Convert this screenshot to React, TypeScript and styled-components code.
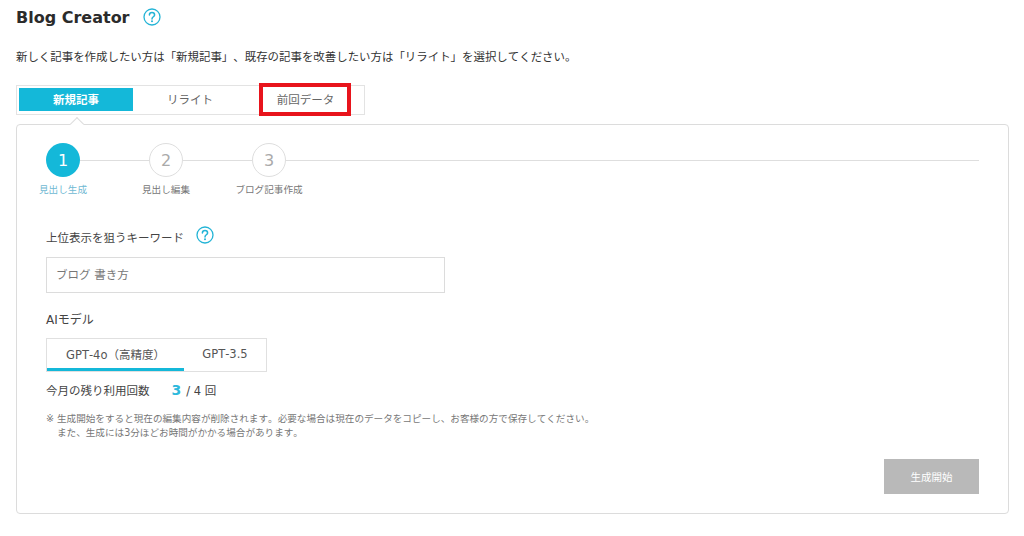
import React from "react";
import styled, { createGlobalStyle } from "styled-components";

const Global = createGlobalStyle`
  html, body { margin: 0; padding: 0; background: #fff; }
  body {
    font-family: "DejaVu Sans", "Noto Sans CJK JP", sans-serif;
    color: #333;
    text-spacing-trim: space-all;
    font-kerning: none;
  }
  * { box-sizing: border-box; }
`;

const Page = styled.div`
  width: 1024px;
  height: 536px;
  padding: 0 16px;
  overflow: hidden;
`;

const TitleRow = styled.div`
  display: flex;
  align-items: center;
  gap: 13px;
  height: 34px;
`;

const Title = styled.h1`
  margin: 0;
  font-size: 16px;
  font-weight: 700;
  color: #2b2b2b;
`;

const Lead = styled.p`
  margin: 13px 0 0;
  height: 20px;
  font-size: 11.45px;
  line-height: 20px;
  color: #333;
  white-space: nowrap;
`;

const TabsWrap = styled.div`
  position: relative;
  margin-top: 18px;
  width: 349px;
  height: 30px;
`;

const Tabs = styled.div`
  display: flex;
  width: 100%;
  height: 100%;
  padding: 2px 2px 3px 2px;
  border: 1px solid #e3e3e3;
  background: #fff;
`;

const Tab = styled.div<{ $active?: boolean; $w: number }>`
  flex: none;
  width: ${(p) => p.$w}px;
  display: flex;
  align-items: center;
  justify-content: center;
  padding-bottom: 2px;
  font-size: 11.5px;
  font-weight: ${(p) => (p.$active ? 700 : 400)};
  color: ${(p) => (p.$active ? "#fff" : "#666")};
  background: ${(p) => (p.$active ? "#14b8d9" : "transparent")};
`;

const Highlight = styled.div`
  position: absolute;
  left: 243px;
  top: -2px;
  width: 92px;
  height: 33px;
  border: 4px solid #e8141c;
`;

const Caret = styled.div`
  position: absolute;
  left: 56px;
  top: 34px;
  width: 10px;
  height: 10px;
  z-index: 2;
  background: #fff;
  border-top: 1px solid #ddd;
  border-left: 1px solid #ddd;
  transform: rotate(45deg);
`;

const Card = styled.section`
  margin-top: 9px;
  width: 993px;
  height: 390px;
  border: 1px solid #dcdcdc;
  border-radius: 4px;
  padding: 18px 29px 0;
  display: flex;
  flex-direction: column;
`;

const Stepper = styled.div`
  display: flex;
  align-items: flex-start;
  height: 52px;
`;

const StepSlot = styled.div`
  width: 34px;
  flex: none;
  display: flex;
  flex-direction: column;
  align-items: center;
`;

const Circle = styled.div<{ $active?: boolean }>`
  flex: none;
  width: 34px;
  height: 34px;
  border-radius: 50%;
  display: flex;
  align-items: center;
  justify-content: center;
  padding-top: 1px;
  font-size: 16px;
  color: ${(p) => (p.$active ? "#fff" : "#aaa")};
  background: ${(p) => (p.$active ? "#14b8d9" : "#fff")};
  border: ${(p) => (p.$active ? "none" : "1px solid #dedede")};
`;

const StepLabel = styled.div<{ $active?: boolean }>`
  margin-top: 6px;
  font-size: 9.6px;
  line-height: 13px;
  white-space: nowrap;
  color: ${(p) => (p.$active ? "#6fb9d3" : "#777")};
`;

const Connector = styled.div<{ $grow?: boolean; $w?: number }>`
  height: 1px;
  margin-top: 17px;
  background: #dedede;
  flex: ${(p) => (p.$grow ? "1" : "none")};
  width: ${(p) => p.$w ?? 0}px;
`;

const FieldLabel = styled.div`
  margin-top: 30px;
  display: flex;
  align-items: center;
  gap: 12px;
  height: 24px;
  font-size: 11.5px;
  color: #444;

  svg {
    margin-top: -4px;
  }
`;

const TextInput = styled.div`
  margin-top: 8px;
  width: 399px;
  height: 36px;
  border: 1px solid #dcdcdc;
  padding: 0 9px 3px;
  display: flex;
  align-items: center;
  font-size: 11.5px;
  color: #777;
`;

const ModelLabel = styled.div`
  margin-top: 17px;
  height: 20px;
  line-height: 20px;
  font-size: 12px;
  color: #444;
`;

const ModelTabs = styled.div`
  margin-top: 8px;
  width: 221px;
  height: 34px;
  border: 1px solid #e0e0e0;
  display: flex;
`;

const ModelTab = styled.div<{ $active?: boolean; $w: number }>`
  width: ${(p) => p.$w}px;
  display: flex;
  align-items: center;
  justify-content: center;
  font-size: 11.5px;
  color: #555;
  border-bottom: 3px solid ${(p) => (p.$active ? "#14b8d9" : "transparent")};
  white-space: nowrap;
`;

const Usage = styled.div`
  margin-top: 8px;
  height: 20px;
  display: flex;
  align-items: center;
  font-size: 11.5px;
  color: #444;
`;

const UsageCount = styled.span`
  margin-left: 22px;
  display: inline-flex;
  align-items: baseline;
  gap: 5px;
`;

const Remaining = styled.b`
  font-size: 14px;
  font-weight: 700;
  color: #2db9dc;
`;

const Note = styled.div`
  margin-top: 12px;
  display: flex;
  gap: 2px;
  font-size: 9.6px;
  line-height: 14px;
  color: #777;
  white-space: nowrap;
`;

const NoteMark = styled.span`
  width: 9px;
  flex: none;
`;

const Footer = styled.div`
  margin-top: 19px;
  display: flex;
  justify-content: flex-end;
`;

const StartButton = styled.div`
  width: 95px;
  height: 35px;
  background: #b9b9b9;
  color: #fff;
  font-size: 10.5px;
  display: flex;
  align-items: center;
  justify-content: center;
`;

const HelpIcon = ({ size }: { size: number }) => (
  <svg width={size} height={size} viewBox="0 0 18 18" fill="none" aria-hidden="true">
    <circle cx="9" cy="9" r="8" stroke="#23b4d6" strokeWidth="1.3" />
    <path
      d="M6.4 7.1C6.4 5.6 7.5 4.6 9 4.6C10.5 4.6 11.6 5.6 11.6 6.9C11.6 8.7 9 8.9 9 10.9"
      stroke="#23b4d6"
      strokeWidth="1.5"
      strokeLinecap="round"
    />
    <circle cx="9" cy="13.2" r="1" fill="#23b4d6" />
  </svg>
);

export default function App() {
  return (
    <Page>
      <Global />
      <TitleRow>
        <Title>Blog Creator</Title>
        <HelpIcon size={18} />
      </TitleRow>
      <Lead>新しく記事を作成したい方は「新規記事」、既存の記事を改善したい方は「リライト」を選択してください。</Lead>
      <TabsWrap>
        <Tabs>
          <Tab $active $w={114}>新規記事</Tab>
          <Tab $w={114}>リライト</Tab>
          <Tab $w={117}>前回データ</Tab>
        </Tabs>
        <Highlight />
        <Caret />
      </TabsWrap>
      <Card>
        <Stepper>
          <StepSlot>
            <Circle $active>1</Circle>
            <StepLabel $active>見出し生成</StepLabel>
          </StepSlot>
          <Connector $w={69} />
          <StepSlot>
            <Circle>2</Circle>
            <StepLabel>見出し編集</StepLabel>
          </StepSlot>
          <Connector $w={69} />
          <StepSlot>
            <Circle>3</Circle>
            <StepLabel>ブログ記事作成</StepLabel>
          </StepSlot>
          <Connector $grow />
        </Stepper>
        <FieldLabel>
          上位表示を狙うキーワード
          <HelpIcon size={18} />
        </FieldLabel>
        <TextInput>ブログ 書き方</TextInput>
        <ModelLabel>AIモデル</ModelLabel>
        <ModelTabs>
          <ModelTab $active $w={137}>GPT-4o（高精度）</ModelTab>
          <ModelTab $w={82}>GPT-3.5</ModelTab>
        </ModelTabs>
        <Usage>
          今月の残り利用回数
          <UsageCount>
            <Remaining>3</Remaining>/ 4 回
          </UsageCount>
        </Usage>
        <Note>
          <NoteMark>※</NoteMark>
          <span>
            生成開始をすると現在の編集内容が削除されます。必要な場合は現在のデータをコピーし、お客様の方で保存してください。
            <br />
            また、生成には3分ほどお時間がかかる場合があります。
          </span>
        </Note>
        <Footer>
          <StartButton>生成開始</StartButton>
        </Footer>
      </Card>
    </Page>
  );
}
